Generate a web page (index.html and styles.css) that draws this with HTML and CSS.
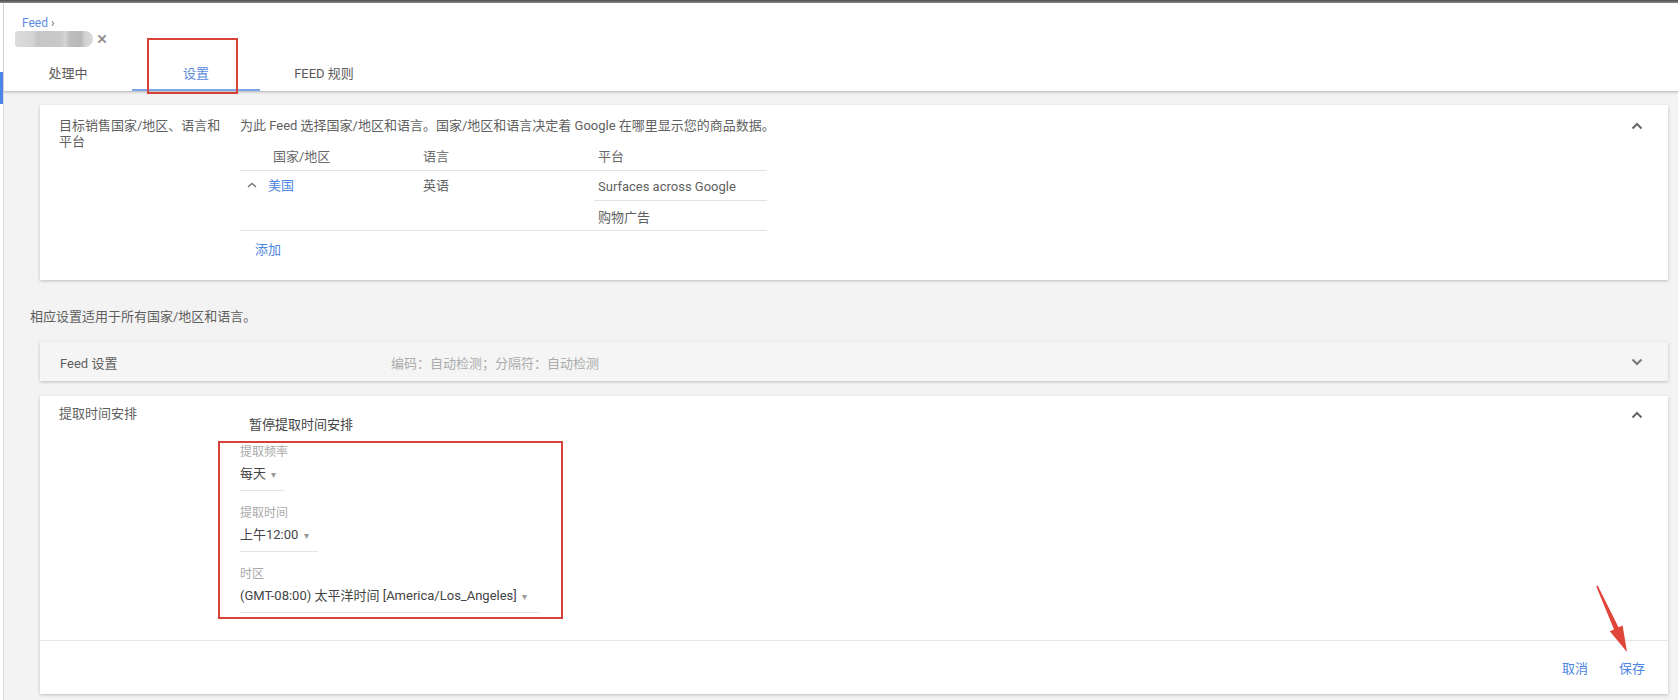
FILE: index.html
```html
<!DOCTYPE html>
<html lang="zh-CN">
<head>
<meta charset="utf-8">
<title>Feed 设置</title>
<link rel="stylesheet" href="styles.css">
</head>
<body>
<div class="topbar"></div>
<div class="app">
  <div class="rail"><div class="rail-mark"></div></div>
  <div class="main">
    <header class="header">
      <div class="crumb">Feed <span class="crumb-sep">›</span></div>
      <div class="chip-row"><span class="chip"></span><span class="chip-x">×</span></div>
      <nav class="tabs">
        <div class="tab">处理中</div>
        <div class="tab active">设置</div>
        <div class="tab">FEED 规则</div>
      </nav>
    </header>
    <div class="content">
      <section class="card">
        <div class="card-row">
          <div class="label">目标销售国家/地区、语言和平台</div>
          <div class="body">
            <div class="desc">为此 Feed 选择国家/地区和语言。国家/地区和语言决定着 Google 在哪里显示您的商品数据。</div>
            <div class="tgrid">
              <div class="th c1">国家/地区</div>
              <div class="th c2">语言</div>
              <div class="th c3">平台</div>
              <div class="td c1 span2"><svg class="mini-caret" width="10" height="6" viewBox="0 0 10 6"><path d="M1 5 L5 1.5 L9 5" fill="none" stroke="#777" stroke-width="1.4"/></svg><span class="link">美国</span></div>
              <div class="td c2 span2">英语</div>
              <div class="td c3 split">Surfaces across Google</div>
              <div class="td c3 last">购物广告</div>
            </div>
            <div class="add link">添加</div>
          </div>
          <div class="caret"><svg width="12" height="8" viewBox="0 0 12 8"><path d="M1.5 6.5 L6 2 L10.5 6.5" fill="none" stroke="#666" stroke-width="2"/></svg></div>
        </div>
      </section>

      <p class="note">相应设置适用于所有国家/地区和语言。</p>

      <section class="card card-collapsed">
        <div class="collapsed-title">Feed 设置</div>
        <div class="collapsed-summary">编码：自动检测；分隔符：自动检测</div>
        <div class="caret caret-mid"><svg width="12" height="8" viewBox="0 0 12 8"><path d="M1.5 1.5 L6 6 L10.5 1.5" fill="none" stroke="#777" stroke-width="2"/></svg></div>
      </section>

      <section class="card card-fetch">
        <div class="card-row fetch-row">
          <div class="label">提取时间安排</div>
          <div class="body">
            <div class="pause">暂停提取时间安排</div>
            <div class="field f1">
              <div class="flabel">提取频率</div>
              <div class="fvalue">每天 <span class="dd">▾</span></div>
            </div>
            <div class="field f2">
              <div class="flabel">提取时间</div>
              <div class="fvalue">上午12:00 <span class="dd">▾</span></div>
            </div>
            <div class="field f3">
              <div class="flabel">时区</div>
              <div class="fvalue">(GMT-08:00) 太平洋时间 [America/Los_Angeles] <span class="dd">▾</span></div>
            </div>
          </div>
          <div class="caret caret-fetch"><svg width="12" height="8" viewBox="0 0 12 8"><path d="M1.5 6.5 L6 2 L10.5 6.5" fill="none" stroke="#666" stroke-width="2"/></svg></div>
        </div>
        <div class="card-footer">
          <span class="link">取消</span>
          <span class="link">保存</span>
        </div>
      </section>
    </div>
  </div>
</div>

<div class="mark mark-tab"></div>
<div class="mark mark-fields"></div>
<svg class="arrow" width="50" height="80" viewBox="1590 580 50 80">
  <polygon points="1596.3,586.4 1597.7,585.6 1618.5,627.3 1622.6,625.4 1627,652 1609.8,631.2 1614,629.4" fill="#e0453a"/>
</svg>
</body>
</html>
```

FILE: styles.css
```css
* { box-sizing: border-box; }

html, body {
  margin: 0;
  padding: 0;
}

body {
  width: 1678px;
  height: 700px;
  overflow: hidden;
  position: relative;
  background: #f3f3f3;
  font-family: Roboto, "Noto Sans CJK SC", "Noto Sans", sans-serif;
  font-size: 13px;
  color: #5f5f5f;
}

.topbar {
  height: 3px;
  background: linear-gradient(#4e4e4e, #8a8a8a);
}

.app {
  display: flex;
  height: 697px;
}

.rail {
  width: 4px;
  flex: none;
  background: #fff;
  border-right: 1px solid #dcdcdc;
}

.rail-mark {
  margin-top: 69px;
  width: 3px;
  height: 32px;
  background: #4a86e8;
}

.main {
  flex: 1;
  display: flex;
  flex-direction: column;
  min-width: 0;
}

/* header */
.header {
  background: #fff;
  height: 89px;
  padding: 12px 0 0 11px;
  border-bottom: 1px solid #c6c6c6;
  box-shadow: 0 1px 2px rgba(0, 0, 0, 0.14);
  display: flex;
  flex-direction: column;
}

.crumb {
  padding-left: 7px;
  height: 16px;
  line-height: 16px;
  font-size: 12px;
  color: #5b8be0;
}

.crumb-sep {
  color: #6a6a6a;
  font-size: 12px;
}

.chip-row {
  display: flex;
  align-items: center;
  height: 17px;
}

.chip {
  width: 78px;
  height: 16px;
  border-radius: 3px 8px 8px 3px;
  background: linear-gradient(90deg, #dcdcdc 0, #d4d4d4 18px, #c6c6c6 22px, #c9c9c9 46px, #d6d6d6 50px, #bdbdbd 55px, #b9b9b9 66px, #d2d2d2 70px, #d8d8d8 78px);
  filter: blur(0.6px);
}

.chip-x {
  margin-left: 4px;
  font-size: 19px;
  line-height: 16px;
  color: #8a8a8a;
}

.tabs {
  display: flex;
  margin-top: 7px;
  margin-left: -11px;
  height: 37px;
}

.tab {
  width: 128px;
  display: flex;
  align-items: center;
  justify-content: center;
  color: #5a5a5a;
  font-size: 13px;
  border-bottom: 2px solid transparent;
  padding-top: 2px;
}

.tab.active {
  color: #5b8be0;
  border-bottom-color: #7fa6e6;
}

/* content */
.content {
  flex: 1;
  padding: 13px 10px 0 26px;
}

.card {
  margin-left: 10px;
  background: #fff;
  box-shadow: 0 1px 3px rgba(0, 0, 0, 0.22);
}

.card-row {
  display: flex;
  padding: 13px 21px 22px 19px;
}

.label {
  width: 170px;
  margin-right: 11px;
  line-height: 16px;
}

.body {
  flex: 1;
}

.desc {
  line-height: 16px;
}

.link {
  color: #4d86e0;
}

.tgrid {
  margin-top: 6px;
  width: 527px;
  display: grid;
  grid-template-columns: 183px 171px 173px;
  grid-template-rows: 31px 30px 30px;
}

.th, .td {
  display: flex;
  align-items: center;
  border-bottom: 1px solid #e2e2e2;
  padding-top: 1px;
}

.th { color: #6a6a6a; }
.th.c1 { padding-left: 33px; }
.th.c3 { padding-left: 4px; }

.td.span2 {
  grid-row: span 2;
  align-items: flex-start;
  padding-top: 7px;
  line-height: 16px;
}

.td.c1 { padding-left: 7px; }
.td.c3 { padding-left: 4px; }

.mini-caret {
  margin: 4px 11px 0 0;
}

.add {
  margin-top: 11px;
  margin-left: 15px;
  line-height: 16px;
}

.caret {
  width: 20px;
  height: 16px;
  display: flex;
  align-items: center;
  justify-content: center;
  flex: none;
}

.note {
  margin: 29px 0 17px 0;
  line-height: 16px;
}

.card-collapsed {
  height: 39px;
  background: #f5f5f5;
  display: flex;
  align-items: center;
  padding: 1px 21px 0 20px;
}

.collapsed-title {
  width: 331px;
}

.collapsed-summary {
  flex: 1;
  color: #ababab;
}

.card-fetch {
  margin-top: 15px;
}

.fetch-row {
  padding-top: 10px;
  padding-bottom: 27px;
  border-bottom: 1px solid #e6e6e6;
}

.caret-fetch {
  margin-top: 1px;
}

.pause {
  margin: 11px 0 11px 9px;
  line-height: 16px;
  color: #444;
}

.field {
  display: flex;
  flex-direction: column;
  border-bottom: 1px solid #e4e4e4;
  padding-bottom: 7px;
  margin-bottom: 14px;
}

.f1 { width: 44px; }
.f2 { width: 78px; }
.f3 { width: 300px; margin-bottom: 0; }

.flabel {
  line-height: 16px;
  font-size: 12px;
  color: #aaa;
  white-space: nowrap;
}

.fvalue {
  margin-top: 6px;
  line-height: 16px;
  color: #444;
  white-space: nowrap;
}

.dd {
  color: #999;
  font-size: 10px;
  margin-left: 2px;
}

.card-footer {
  height: 53px;
  display: flex;
  justify-content: flex-end;
  align-items: center;
  gap: 31px;
  padding: 0 23px 0 0;
}

/* annotations */
.mark {
  position: absolute;
  border: 2px solid #d8403a;
  pointer-events: none;
}

.mark-tab {
  left: 147px;
  top: 38px;
  width: 91px;
  height: 56px;
}

.mark-fields {
  left: 218px;
  top: 441px;
  width: 345px;
  height: 178px;
}

.arrow {
  position: absolute;
  left: 1590px;
  top: 580px;
}
```
